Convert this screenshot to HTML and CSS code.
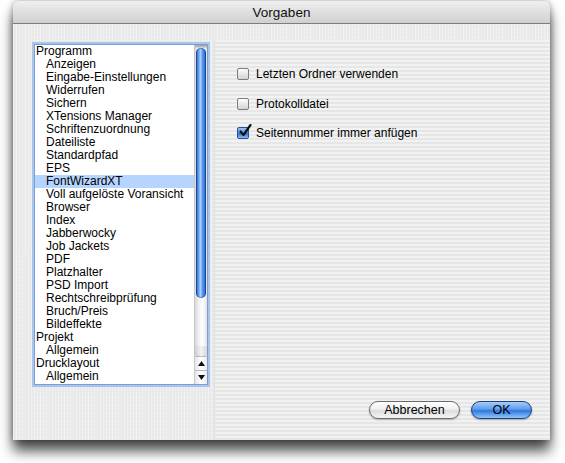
FILE: index.html
```html
<!DOCTYPE html>
<html lang="de">
<head>
<meta charset="utf-8">
<title>Vorgaben</title>
<link rel="stylesheet" href="styles.css">
</head>
<body>
<div class="stage">
  <div class="window">
    <div class="titlebar">Vorgaben</div>
    <div class="content">
      <div class="left">
        <div class="listbox">
          <ul class="list">
            <li class="l0">Programm</li>
            <li class="l1">Anzeigen</li>
            <li class="l1">Eingabe-Einstellungen</li>
            <li class="l1">Widerrufen</li>
            <li class="l1">Sichern</li>
            <li class="l1">XTensions Manager</li>
            <li class="l1">Schriftenzuordnung</li>
            <li class="l1">Dateiliste</li>
            <li class="l1">Standardpfad</li>
            <li class="l1">EPS</li>
            <li class="l1 sel">FontWizardXT</li>
            <li class="l1">Voll aufgelöste Voransicht</li>
            <li class="l1">Browser</li>
            <li class="l1">Index</li>
            <li class="l1">Jabberwocky</li>
            <li class="l1">Job Jackets</li>
            <li class="l1">PDF</li>
            <li class="l1">Platzhalter</li>
            <li class="l1">PSD Import</li>
            <li class="l1">Rechtschreibprüfung</li>
            <li class="l1">Bruch/Preis</li>
            <li class="l1">Bildeffekte</li>
            <li class="l0">Projekt</li>
            <li class="l1">Allgemein</li>
            <li class="l0">Drucklayout</li>
            <li class="l1">Allgemein</li>
          </ul>
          <div class="scrollbar">
            <div class="cap"></div>
            <div class="thumb"></div>
            <div class="track"><div class="trackend"></div></div>
            <div class="arrow up"><svg width="7" height="5" viewBox="0 0 7 5"><path d="M3.5 0 L7 5 L0 5 Z" fill="#111"/></svg></div>
            <div class="arrow down"><svg width="7" height="5" viewBox="0 0 7 5"><path d="M0 0 L7 0 L3.5 5 Z" fill="#111"/></svg></div>
          </div>
        </div>
      </div>
      <div class="right">
        <div class="options">
          <label class="opt"><span class="box"></span><span class="txt">Letzten Ordner verwenden</span></label>
          <label class="opt"><span class="box"></span><span class="txt">Protokolldatei</span></label>
          <label class="opt"><span class="box checked"><svg class="tick" width="14" height="14" viewBox="0 0 14 14"><path d="M2.5 7.5 L5.5 11 L12.5 1" fill="none" stroke="#111" stroke-width="2.2" stroke-linecap="round" stroke-linejoin="round"/></svg></span><span class="txt">Seitennummer immer anfügen</span></label>
        </div>
        <div class="buttons">
          <div class="btn cancel">Abbrechen</div>
          <div class="btn ok">OK</div>
        </div>
      </div>
    </div>
  </div>
</div>
</body>
</html>
```
FILE: styles.css
```css
html, body {
  margin: 0;
  padding: 0;
  background: #ffffff;
}
body {
  font-family: "Liberation Sans", Arial, sans-serif;
  font-size: 12px;
  color: #000;
  min-height: 463px;
}
.stage {
  padding: 1px 15px 23px 13px;
  width: 537px;
}
.window {
  width: 537px;
  height: 439px;
  border-radius: 6px 6px 0 0;
  overflow: hidden;
  box-shadow: 0 11px 13px rgba(0,0,0,0.7), 0 0 6px rgba(0,0,0,0.35);
  background-color: #ececec;
  background-image:
    repeating-linear-gradient(90deg, rgba(255,255,255,0.35) 0 1px, transparent 1px 3px),
    repeating-linear-gradient(0deg, rgba(0,0,0,0.025) 0 1px, transparent 1px 2px);
  display: flex;
  flex-direction: column;
}
.titlebar {
  height: 22px;
  line-height: 23px;
  border-bottom: 1px solid #7d7d7d;
  text-align: center;
  font-size: 13.5px;
  color: #111;
  background: linear-gradient(#efefef, #d0d0d0);
}
.content {
  flex: 1;
  display: flex;
}
.left {
  width: 201px;
  box-sizing: border-box;
  padding: 18px 0 0 19px;
}
.listbox {
  width: 178px;
  height: 345px;
  box-sizing: border-box;
  border: 2px solid #a9c5ec;
  box-shadow: inset 0 0 0 1px #7a9ed6;
  background: #fff;
  display: flex;
  padding: 1px;
}
.list {
  list-style: none;
  margin: 0;
  padding: 0;
  flex: 1;
  overflow: hidden;
}
.list li {
  height: 13px;
  line-height: 13px;
  white-space: nowrap;
}
.list .l0 { padding-left: 1px; }
.list .l1 { padding-left: 11px; }
.list .sel { background: #b5d5ff; }
.scrollbar {
  width: 12px;
  display: flex;
  flex-direction: column;
  background: linear-gradient(90deg, #d9d9d9, #f7f7f7 40%, #ffffff 60%, #e4e4e4);
  border-left: 1px solid #c8c8c8;
}
.cap {
  height: 3px;
  background: linear-gradient(#9a9a9a, #dcdcdc);
}
.thumb {
  height: 250px;
  margin: 0 1px;
  border-radius: 6px;
  background: linear-gradient(90deg, #1d55b4, #5f9df0 25%, #a9d0fb 45%, #5a98ec 65%, #2e6fd4 90%, #1b4fa8);
  box-shadow: inset 0 0 0 1px rgba(10,40,110,0.45);
}
.track {
  flex: 1;
  display: flex;
  flex-direction: column;
  justify-content: flex-end;
}
.trackend {
  height: 10px;
  border-radius: 0 0 6px 6px;
  background: linear-gradient(90deg, #d0d0d0, #f2f2f2 50%, #d8d8d8);
  box-shadow: 0 1px 1px rgba(0,0,0,0.2);
}
.arrow {
  height: 13px;
  display: flex;
  align-items: center;
  justify-content: center;
  border-top: 1px solid #bcbcbc;
  background: linear-gradient(90deg, #e6e6e6, #ffffff 50%, #ececec);
}
.right {
  flex: 1;
  margin-top: 16px;
  display: flex;
  flex-direction: column;
  background: repeating-linear-gradient(180deg, #f2f2f2 0 2px, #e6e6e6 2px 4px);
  border-left: 1px solid #e0e0e0;
}
.options {
  padding: 27px 0 0 22px;
  display: flex;
  flex-direction: column;
  gap: 15.5px;
}
.opt {
  display: flex;
  align-items: center;
  height: 14px;
  gap: 7px;
}
.box {
  position: relative;
  width: 12px;
  height: 12px;
  box-sizing: border-box;
  border: 1px solid #7e7e7e;
  border-radius: 2px;
  background: linear-gradient(#fdfdfd, #e6e6e6 55%, #d4d4d4);
}
.box.checked {
  border-color: #28528f;
  background: linear-gradient(#9cc4f3, #4f8ee6 50%, #2e73dc 55%, #8bbcf5);
}
.tick {
  position: absolute;
  left: 0px;
  top: -4px;
}
.buttons {
  margin-top: auto;
  display: flex;
  justify-content: flex-end;
  gap: 11px;
  padding: 0 18px 21px 0;
}
.btn {
  height: 18px;
  line-height: 17px;
  box-sizing: border-box;
  border-radius: 9px;
  text-align: center;
  font-size: 12.5px;
}
.cancel {
  width: 91px;
  border: 1px solid #6a6a6a;
  background: linear-gradient(#ffffff, #f0f0f0 45%, #dcdcdc 55%, #f6f6f6);
  box-shadow: 0 1px 2px rgba(0,0,0,0.25);
}
.ok {
  width: 61px;
  border: 1px solid #1d3f7a;
  background: linear-gradient(#a8cdf8, #5c9cec 45%, #2f78e0 55%, #8ec6fb);
  box-shadow: 0 1px 2px rgba(0,0,0,0.3);
}
```
